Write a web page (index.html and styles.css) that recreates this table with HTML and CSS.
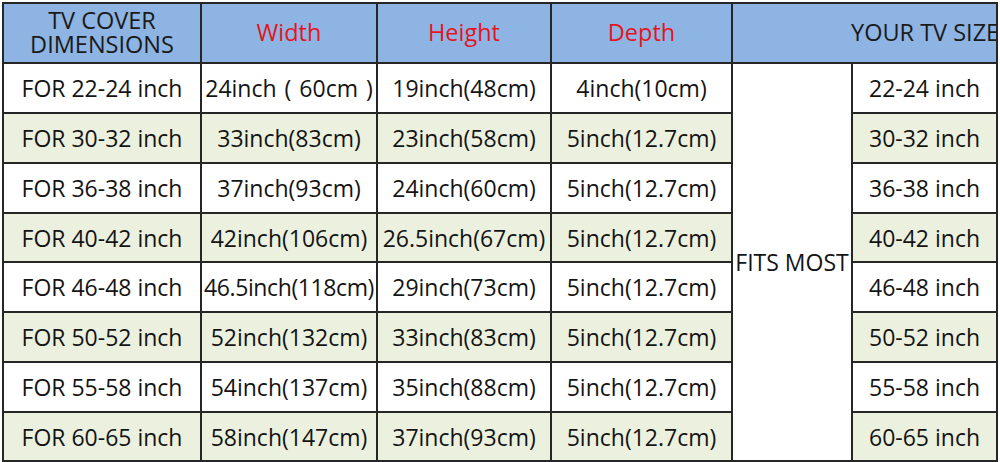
FILE: index.html
```html
<!DOCTYPE html>
<html>
<head>
<meta charset="utf-8">
<link rel="stylesheet" href="styles.css">
</head>
<body>
<div class="sheet">
  <div class="cell head">TV COVER<br>DIMENSIONS</div>
  <div class="cell head red">Width</div>
  <div class="cell head red">Height</div>
  <div class="cell head red">Depth</div>
  <div class="cell head size">YOUR TV SIZE</div>

  <div class="cell">FOR 22-24 inch</div>
  <div class="cell wide">24inch ( 60cm )</div>
  <div class="cell">19inch(48cm)</div>
  <div class="cell">4inch(10cm)</div>
  <div class="cell fits">FITS MOST</div>
  <div class="cell">22-24 inch</div>

  <div class="cell alt">FOR 30-32 inch</div>
  <div class="cell alt">33inch(83cm)</div>
  <div class="cell alt">23inch(58cm)</div>
  <div class="cell alt">5inch(12.7cm)</div>
  <div class="cell alt">30-32 inch</div>

  <div class="cell">FOR 36-38 inch</div>
  <div class="cell">37inch(93cm)</div>
  <div class="cell">24inch(60cm)</div>
  <div class="cell">5inch(12.7cm)</div>
  <div class="cell">36-38 inch</div>

  <div class="cell alt">FOR 40-42 inch</div>
  <div class="cell alt">42inch(106cm)</div>
  <div class="cell alt">26.5inch(67cm)</div>
  <div class="cell alt">5inch(12.7cm)</div>
  <div class="cell alt">40-42 inch</div>

  <div class="cell">FOR 46-48 inch</div>
  <div class="cell tight">46.5inch(118cm)</div>
  <div class="cell">29inch(73cm)</div>
  <div class="cell">5inch(12.7cm)</div>
  <div class="cell">46-48 inch</div>

  <div class="cell alt">FOR 50-52 inch</div>
  <div class="cell alt">52inch(132cm)</div>
  <div class="cell alt">33inch(83cm)</div>
  <div class="cell alt">5inch(12.7cm)</div>
  <div class="cell alt">50-52 inch</div>

  <div class="cell">FOR 55-58 inch</div>
  <div class="cell">54inch(137cm)</div>
  <div class="cell">35inch(88cm)</div>
  <div class="cell">5inch(12.7cm)</div>
  <div class="cell">55-58 inch</div>

  <div class="cell alt">FOR 60-65 inch</div>
  <div class="cell alt">58inch(147cm)</div>
  <div class="cell alt">37inch(93cm)</div>
  <div class="cell alt">5inch(12.7cm)</div>
  <div class="cell alt">60-65 inch</div>
</div>
</body>
</html>
```
FILE: styles.css
```css
html, body {
  margin: 0;
  padding: 0;
  background: #ffffff;
}
body {
  padding: 2px 0 0 2px;
  width: 1000px;
  height: 462px;
  box-sizing: border-box;
  overflow: hidden;
}
.sheet {
  display: grid;
  grid-template-columns: 196px 174px 172px 179px 118px 143px;
  grid-template-rows: 58px 48px 48px 48px 47px 48px 48px 48px 47px;
  gap: 2px;
  padding: 2px;
  width: max-content;
  background: #262626;
  font-family: "Open Sans", "Noto Sans CJK SC", sans-serif;
  font-size: 23px;
  color: #141414;
}
.cell {
  display: flex;
  align-items: center;
  justify-content: center;
  text-align: center;
  white-space: nowrap;
  background: #ffffff;
  position: relative;
}
.tight {
  letter-spacing: -0.4px;
}
.wide {
  word-spacing: 2px;
}
.alt {
  background: #ebf1de;
}
.head {
  background: #8db4e2;
  font-size: 23.5px;
  line-height: 24px;
  padding-bottom: 3px;
  color: #1a1a1a;
}
.red {
  color: #e4141f;
}
.size {
  grid-column: 5 / 7;
  justify-content: flex-start;
  padding-left: 118px;
  overflow: hidden;
}
.fits {
  grid-row: 2 / 10;
  grid-column: 5;
  z-index: 1;
  background: #ffffff;
}
```
